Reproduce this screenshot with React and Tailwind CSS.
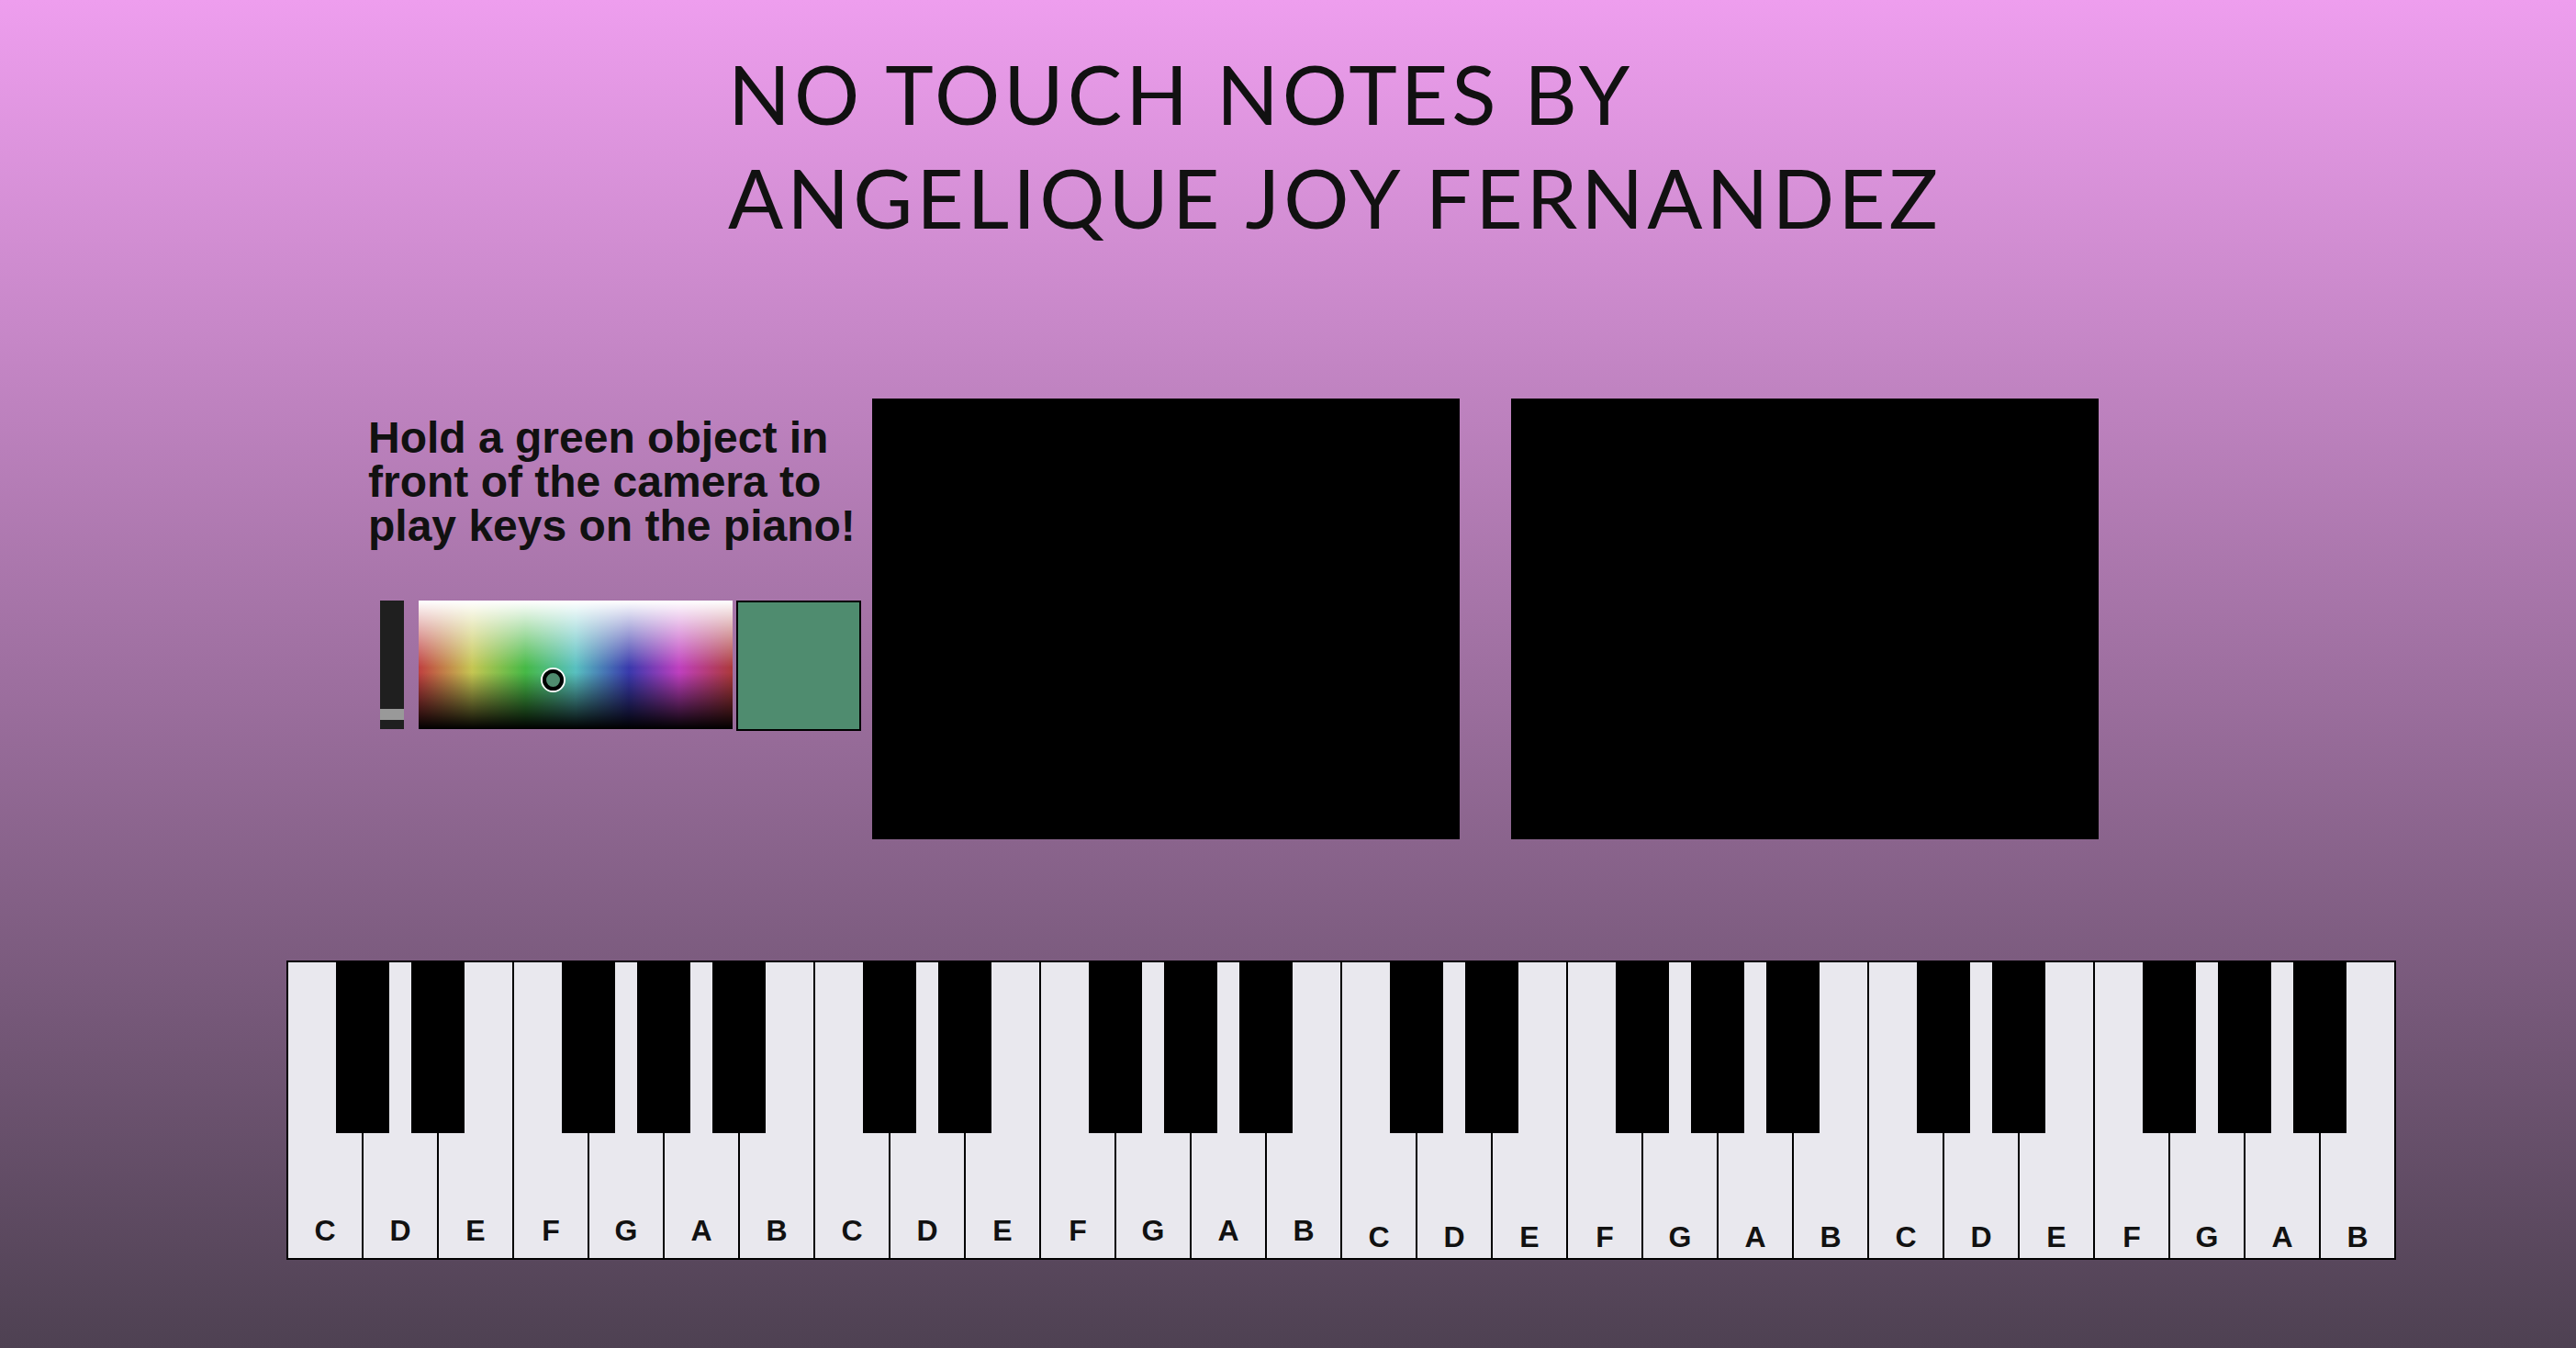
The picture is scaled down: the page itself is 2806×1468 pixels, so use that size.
import React from 'react';

// white keys for four octaves
const OCTAVE = ['C', 'D', 'E', 'F', 'G', 'A', 'B'];
const WHITE_KEYS = [...OCTAVE, ...OCTAVE, ...OCTAVE, ...OCTAVE];
const KEY_PITCH = 82;

// black key sits on the divider after these white keys (index within an octave)
const BLACK_AFTER = [0, 1, 3, 4, 5];

const blackKeys = [];
for (let o = 0; o < 4; o++) {
  BLACK_AFTER.forEach((i) => blackKeys.push(o * 7 + i + 1));
}

const ColorPicker = () => (
  <div className="flex items-start">
    {/* brightness slider */}
    <div className="ml-[13px] w-[26px] h-[140px] bg-[#1f1f1f] flex flex-col">
      <div className="h-[118px]" />
      <div className="h-[12px] bg-[#999999]" />
    </div>

    {/* hue / lightness field */}
    <div className="relative ml-[16px] w-[342px] h-[140px] bg-[linear-gradient(to_right,hsl(0,50%,50%),hsl(60,50%,55%)_17%,hsl(120,45%,50%)_34%,hsl(180,45%,55%)_50%,hsl(240,50%,45%)_67%,hsl(300,50%,50%)_83%,hsl(360,50%,45%))]">
      <div className="absolute inset-0 bg-[linear-gradient(to_bottom,#ffffff_0%,rgba(255,255,255,0)_52%,rgba(0,0,0,0)_56%,#000000_100%)]" />
      <div className="absolute left-[133px] top-[73px] w-[27px] h-[27px] rounded-full border-2 border-white">
        <div className="w-full h-full rounded-full border-[4px] border-black bg-[#4f8c6f]" />
      </div>
    </div>

    {/* picked colour */}
    <div className="ml-[4px] w-[136px] h-[142px] border-2 border-black bg-[#4f8c6f]" />
  </div>
);

const Piano = () => (
  <div className="relative ml-[312px] w-[2298px] h-[326px] border-2 border-black bg-[#e9e8ee] flex">
    {WHITE_KEYS.map((note, i) => (
      <div
        key={i}
        className={`h-full flex items-end justify-center text-[32px] leading-none font-bold text-[#111] ${
          i < 27 ? 'w-[82px] border-r-2 border-black' : 'w-[80px]'
        } ${i < 14 ? 'pb-[14px]' : 'pb-[7px]'}`}
      >
        {note}
      </div>
    ))}
    {blackKeys.map((k) => (
      <div
        key={k}
        className="absolute top-0 w-[58px] h-[186px] bg-black"
        style={{ left: k * KEY_PITCH - 2 + 1 - 29 }}
      />
    ))}
  </div>
);

export default function App() {
  return (
    <div className="w-full h-[1468px] overflow-hidden bg-[linear-gradient(to_bottom,#ee9eee,#4e4152)] text-[#111] font-['Liberation_Sans',Arial,sans-serif]">
      <h1 className="pt-[46px] pl-[793px] font-['Lato',sans-serif] font-normal text-[89px] leading-[112.6px] tracking-[4px]">
        NO TOUCH NOTES BY
        <br />
        ANGELIQUE JOY FERNANDEZ
      </h1>

      <div className="mt-[163px] flex items-start pl-[401px]">
        <div className="w-[537px] flex flex-col">
          <p className="mt-[19px] text-[48px] leading-[48px] font-bold">
            Hold a green object in
            <br />
            front of the camera to
            <br />
            play keys on the piano!
          </p>
          <div className="mt-[57px]">
            <ColorPicker />
          </div>
        </div>
        <div className="ml-[12px] w-[640px] h-[480px] bg-black" />
        <div className="ml-[56px] w-[640px] h-[480px] bg-black" />
      </div>

      <div className="mt-[132px]">
        <Piano />
      </div>
    </div>
  );
}
